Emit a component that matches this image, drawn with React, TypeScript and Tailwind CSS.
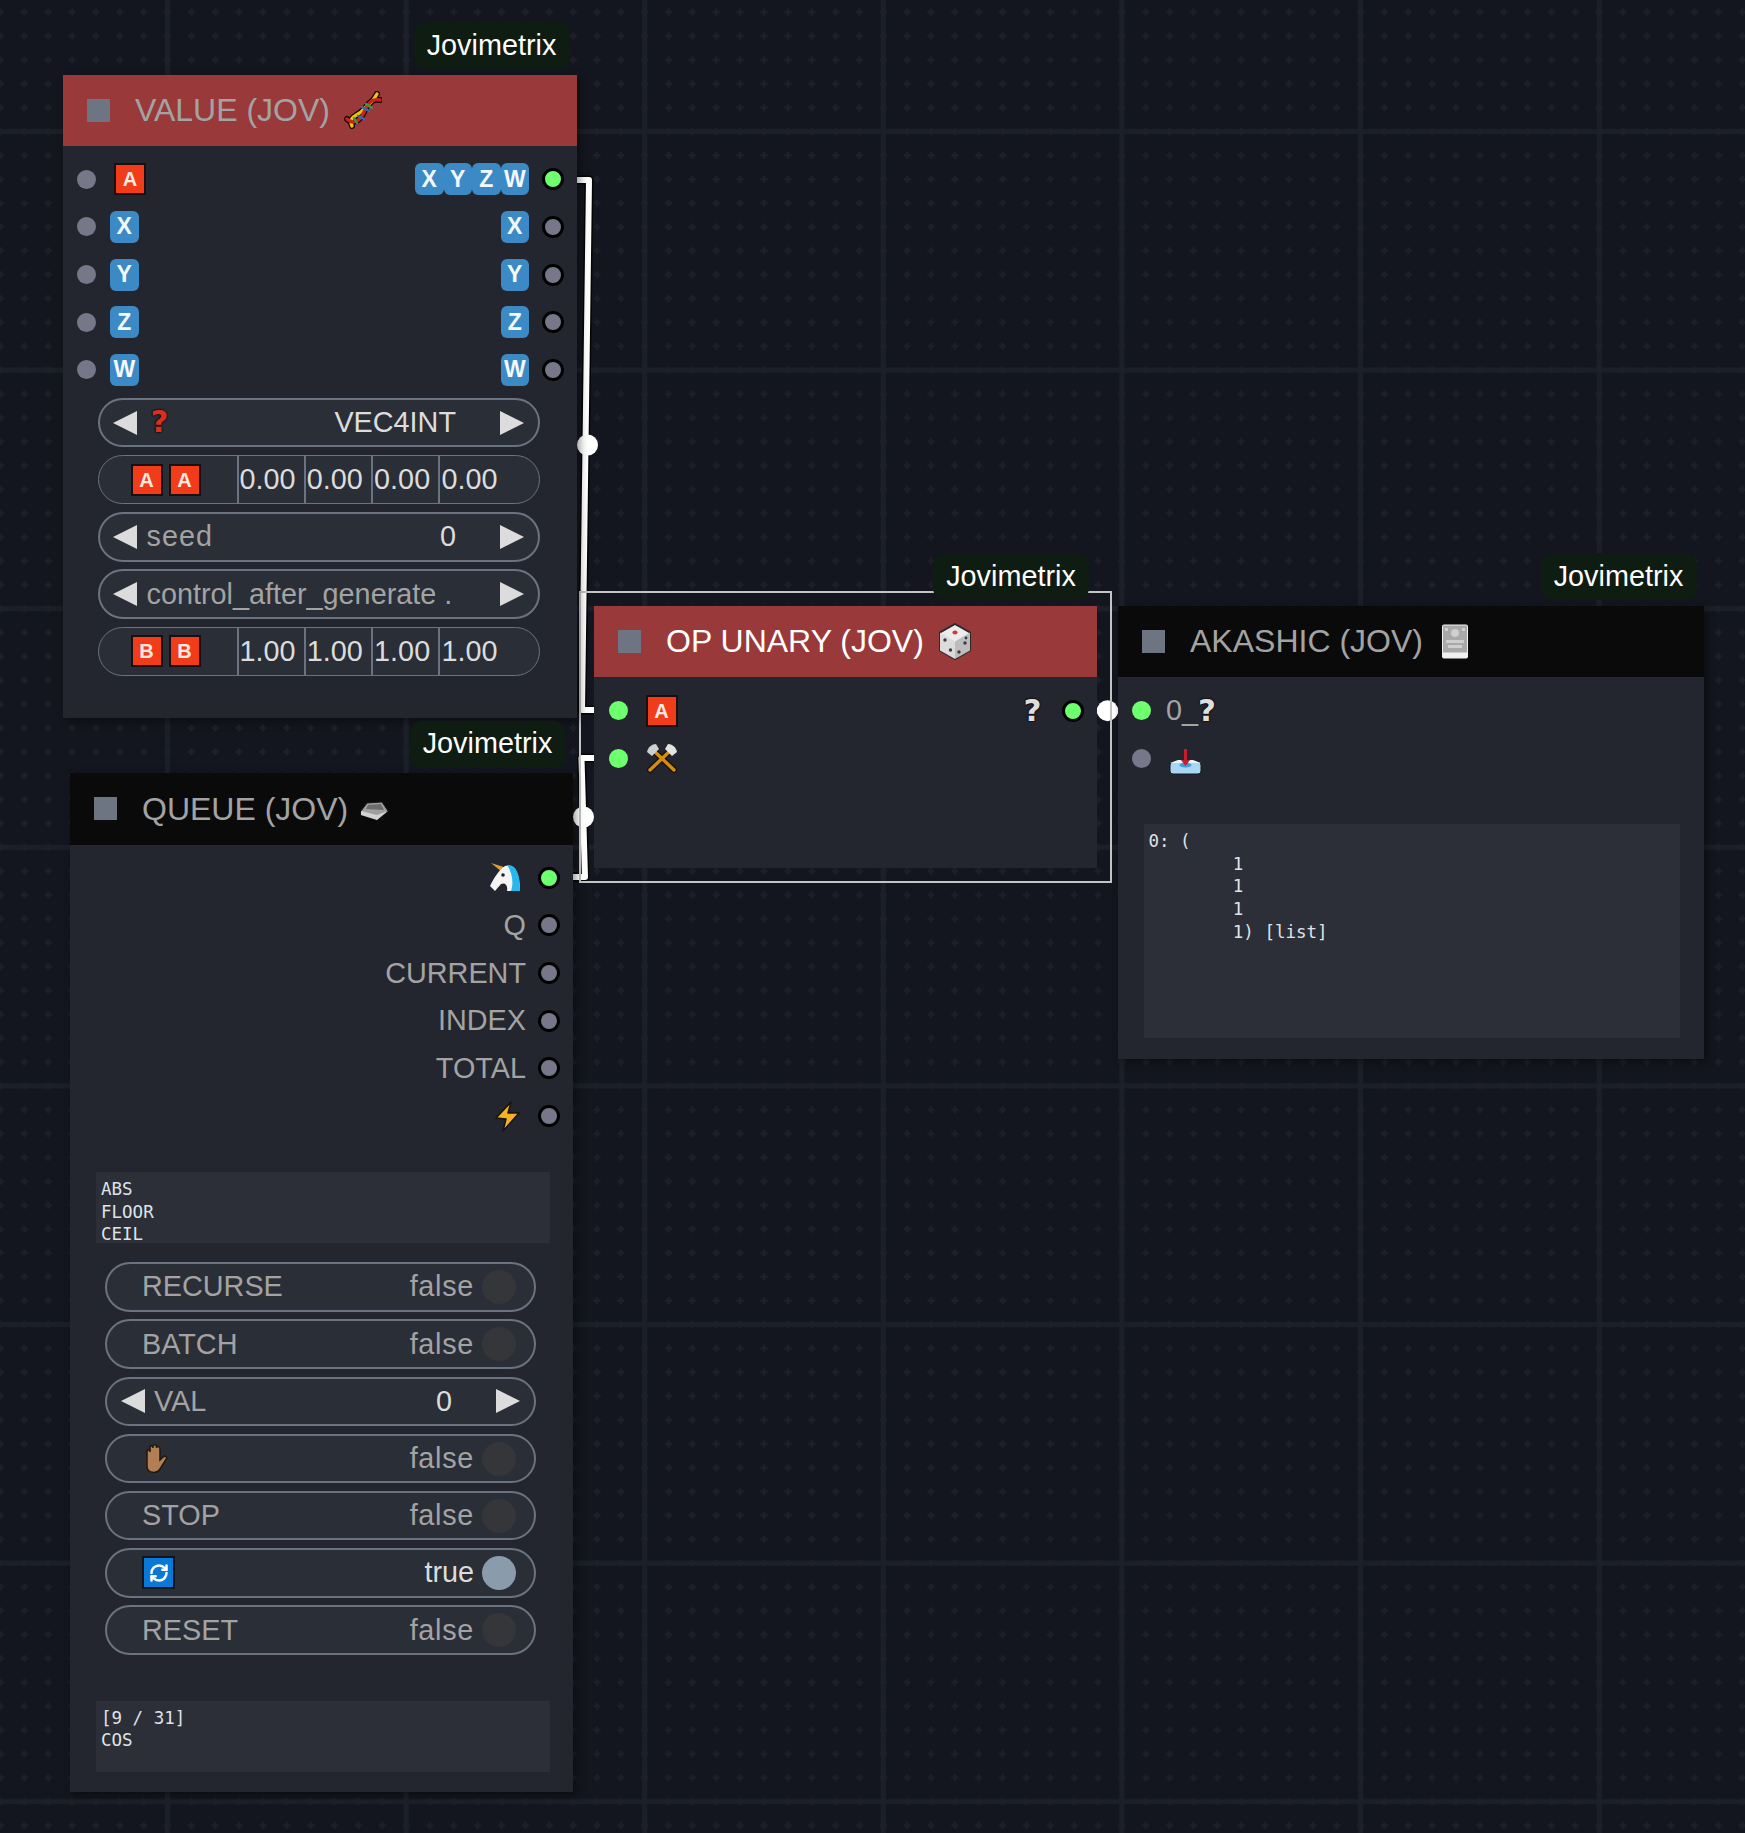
import type { ReactNode } from "react";
import { RefreshCw } from "lucide-react";

const sans = "font-['Liberation_Sans',Arial,sans-serif]";
const mono = "font-['DejaVu_Sans_Mono',monospace]";
const GREEN = "bg-[#6dff6d]";
const GREY = "bg-[#77778a]";

const Grid = () => {
  const steps = [-5, -4, -3, -2, -1, 0, 1, 2, 3, 4, 5];
  const at = (k: number) => 119.3 + k * 23.86;
  return (
    <svg className="absolute inset-0" width="1745" height="1833">
      <defs>
        <pattern id="grid" x="48.2" y="12.2" width="238.6" height="238.6" patternUnits="userSpaceOnUse">
          <rect x="116.8" y="0" width="5" height="238.6" fill="#1b1f27" />
          <rect x="0" y="116.8" width="238.6" height="5" fill="#1b1f27" />
          {steps.map((a) =>
            steps.map((b) => (
              <g key={`${a}-${b}`} fill="#1d2029">
                <rect x={at(a) - 3.5} y={at(b) - 1.2} width="7" height="2.4" />
                <rect x={at(a) - 1.2} y={at(b) - 3.5} width="2.4" height="7" />
              </g>
            ))
          )}
        </pattern>
      </defs>
      <rect width="1745" height="1833" fill="url(#grid)" />
    </svg>
  );
};

const Wires = () => (
  <svg className="absolute inset-0" width="1745" height="1833">
    <g fill="none" strokeLinejoin="round">
      <path d="M577 180 L589 180 L582 710 L594 710" stroke="#050505" strokeWidth="9" />
      <path d="M573 877 L585 877 L581.5 758 L594 758" stroke="#050505" strokeWidth="9" />
      <path d="M577 180 L589 180 L582 710 L594 710" stroke="#fff" strokeWidth="6" />
      <path d="M573 877 L585 877 L581.5 758 L594 758" stroke="#fff" strokeWidth="6" />
      <path d="M1097 710.7 L1118 710.7" stroke="#fff" strokeWidth="6" />
    </g>
    <circle cx="587.5" cy="445" r="10.5" fill="#fff" />
    <circle cx="583.5" cy="817" r="10.5" fill="#fff" />
    <circle cx="1107.5" cy="710.7" r="10.5" fill="#fff" />
  </svg>
);

const Dot = ({ color, out }: { color: string; out?: boolean }) =>
  out ? (
    <div className={`size-[22px] shrink-0 rounded-full border-[3px] border-black ${color}`} />
  ) : (
    <div className={`size-[19px] shrink-0 rounded-full ${color}`} />
  );

const Tile = ({ ch }: { ch: string }) => (
  <div className={`flex size-[32px] shrink-0 items-center justify-center border-2 border-[#1a0f0e] bg-[#f03c18] text-[20px] leading-none font-bold text-[#ffe9e2] ${sans}`}>
    {ch}
  </div>
);

const Key = ({ ch }: { ch: string }) => (
  <div className={`flex h-[32px] w-[28.5px] shrink-0 items-center justify-center rounded-[6px] bg-[#3b8ac6] text-[23px] leading-none font-bold text-[#f4f9fd] ${sans}`}>
    {ch}
  </div>
);

const Ask = ({ red }: { red?: boolean }) => (
  <span
    className={`font-['DejaVu_Sans',sans-serif] text-[31px] leading-none font-bold ${
      red ? "text-[#d8301c] [text-shadow:0_0_2px_#000,0_0_2px_#000]" : "text-[#dedede] [text-shadow:0_0_2px_#000,0_0_2px_#000]"
    }`}
  >
    ?
  </span>
);

const DnaIcon = () => (
  <svg width="38" height="38" viewBox="0 0 38 38" className="ml-[14px]">
    <g fill="none" strokeLinecap="round">
      <path d="M8 35 C4 25 14 25 19 19 S28 13 33 3" stroke="#1a0505" strokeWidth="6" />
      <path d="M3 28 C10 35 17 28 20 21 S27 7 36 9" stroke="#1a0505" strokeWidth="6" />
      <path d="M8 35 C4 25 14 25 19 19 S28 13 33 3" stroke="#e8c414" strokeWidth="3.4" />
      <path d="M3 28 C10 35 17 28 20 21 S27 7 36 9" stroke="#c8231f" strokeWidth="3.4" />
      <path d="M14 25 L20 28 M18 16 L25 20" stroke="#2c6fb5" strokeWidth="2.4" />
      <path d="M10 27 L13 32 M22 13 L28 17" stroke="#3b9a4a" strokeWidth="2.2" />
    </g>
  </svg>
);

const DieIcon = () => (
  <svg width="34" height="37" viewBox="0 0 34 37" className="ml-[14px]">
    <polygon points="17,1 32,9.5 32,27.5 17,36 2,27.5 2,9.5" fill="#ececec" stroke="#2a2a2a" strokeWidth="2" />
    <polygon points="17,18.5 32,9.5 32,27.5 17,36" fill="#bdbdbd" />
    <polygon points="17,18.5 2,9.5 2,27.5 17,36" fill="#dcdcdc" />
    <ellipse cx="17" cy="9.5" rx="2.6" ry="2" fill="#d23a3a" />
    <g fill="#3c3c3c">
      <circle cx="7" cy="17" r="1.7" />
      <circle cx="12.5" cy="27" r="1.7" />
      <circle cx="21" cy="29" r="1.7" />
      <circle cx="27" cy="20" r="1.7" />
      <circle cx="28" cy="15" r="1.4" />
    </g>
  </svg>
);

const BookIcon = () => (
  <svg width="28" height="35" viewBox="0 0 28 35" className="ml-[18px]">
    <rect x="1" y="0.5" width="26" height="34" rx="2" fill="#f0f0f0" />
    <rect x="2" y="1.5" width="24" height="27" fill="#a9a9a9" />
    <g fill="#cfcfcf">
      <circle cx="14" cy="9" r="4" />
      <rect x="5" y="16" width="18" height="3" />
      <rect x="7" y="21" width="14" height="3" />
      <rect x="4" y="4" width="3" height="3" />
      <rect x="21" y="4" width="3" height="3" />
    </g>
  </svg>
);

const TrayIcon = () => (
  <svg width="29" height="20" viewBox="0 0 29 20" className="mt-[4px] ml-[12px]">
    <polygon points="1,10 7,2 22,1 28,10 17,19 1,14" fill="#9f9f9f" stroke="#1a1a1a" strokeWidth="1" />
    <polygon points="6,8 8,4 21,3 24,9" fill="#6d6d6d" />
    <polygon points="1,10 17,14 28,10 17,19 1,14" fill="#d2d2d2" />
  </svg>
);

const UnicornIcon = () => (
  <svg width="31" height="30" viewBox="0 0 31 30">
    <path d="M17 5 L1 0 L12 9 Z" fill="#d7a13a" />
    <path d="M15 3 C24 1 30 9 30 28 L17 28 C18 22 15 19 11 21 L5 28 L0 23 C4 15 8 8 15 3 Z" fill="#f4f4f4" />
    <path d="M17 2 C26 1 30 10 30 28 L21 28 C24 20 22 9 17 2 Z" fill="#27b7ec" />
    <circle cx="13" cy="12" r="1.8" fill="#222" />
  </svg>
);

const BoltIcon = () => (
  <svg width="27" height="31" viewBox="0 0 27 31">
    <polygon points="17,1 2,17 12,18 9,30 25,12 14,12" fill="#f4b324" stroke="#161310" strokeWidth="1.5" strokeLinejoin="round" />
  </svg>
);

const AxesIcon = () => (
  <svg width="32" height="30" viewBox="0 0 32 30">
    <g strokeLinecap="round">
      <path d="M7 7 L28 27" stroke="#1b1206" strokeWidth="6" />
      <path d="M25 7 L4 27" stroke="#1b1206" strokeWidth="6" />
      <path d="M7 7 L28 27" stroke="#d48d12" strokeWidth="3.4" />
      <path d="M25 7 L4 27" stroke="#d48d12" strokeWidth="3.4" />
    </g>
    <path d="M1 9 C2 4 6 1 10 1 L13 6 L6 13 Z" fill="#cfcfcf" />
    <path d="M31 9 C30 4 26 1 22 1 L19 6 L26 13 Z" fill="#e3e3e3" />
  </svg>
);

const InboxIcon = () => (
  <svg width="33" height="26" viewBox="0 0 33 26">
    <rect x="1" y="13" width="31" height="12" rx="3" fill="#a9d6f2" stroke="#141a22" />
    <path d="M1 14 L9 11 L24 11 L32 14 L22 14 L19 18 L14 18 L11 14 Z" fill="#e6f4fc" />
    <ellipse cx="16.5" cy="16" rx="6" ry="2.6" fill="#3f9be0" />
    <path d="M15 0 H18 V11 H21 L16.5 17 L12 11 H15 Z" fill="#c91d2c" />
  </svg>
);

const HandIcon = () => (
  <svg width="26" height="31" viewBox="0 0 26 31">
    <path
      d="M5 9 C5 6 8 6 8 9 V5 C8 2 11 2 11 5 V3.5 C11 1 14.5 1 14.5 3.5 V5 C14.5 3 18 3 18 6 V17 L21 14 C23.5 12 25.5 14 24 16.5 L18 26 C15 31 6 30.5 5 24 Z"
      fill="#b27f54"
      stroke="#1f1710"
      strokeWidth="1.5"
    />
  </svg>
);

const Title = ({ text, color, light, icon }: { text: string; color: string; light?: boolean; icon: ReactNode }) => (
  <div className={`flex h-[71.5px] shrink-0 items-center pl-[24px] ${color}`}>
    <div className="mr-[25px] size-[23px] shrink-0 bg-[#6e7582]" />
    <span className={`text-[32px] leading-none whitespace-nowrap ${light ? "text-white" : "text-[#a3a3a3]"}`}>{text}</span>
    {icon}
  </div>
);

const Badge = () => (
  <div className={`absolute right-[7.5px] bottom-full z-10 mb-[5.5px] flex h-[47px] w-[156px] items-center justify-center rounded-[12px] bg-[#0f1c12] text-[28.8px] text-white ${sans}`}>
    Jovimetrix
  </div>
);

const Row = ({ left, right }: { left?: ReactNode; right?: ReactNode }) => (
  <div className="flex h-[47.67px] items-center justify-between">
    <div className="flex items-center">{left}</div>
    <div className="flex items-center">{right}</div>
  </div>
);

const Arrow = ({ flip }: { flip?: boolean }) => (
  <svg width="24" height="24" viewBox="0 0 24 24" className="shrink-0">
    <polygon points={flip ? "0,0 24,12 0,24" : "24,0 0,12 24,24"} fill="#dcdcdc" />
  </svg>
);

const Stepper = ({ label, value, tall }: { label: ReactNode; value: string; tall?: boolean }) => (
  <div className={`flex h-[49.5px] items-center rounded-full border-2 border-[#6b7280] bg-[#2a2e37] pr-[14px] pl-[13.5px] text-[28.8px] ${tall ? "mt-0" : ""}`}>
    <Arrow />
    <div className="ml-[9.5px] flex min-w-0 flex-1 items-center text-[#a3a3a3]">{label}</div>
    <span className="mr-[44px] text-[#dcdcdc]">{value}</span>
    <Arrow flip />
  </div>
);

const Multi = ({ ch, value }: { ch: string; value: string }) => (
  <div className="flex h-[49.5px] items-stretch rounded-full border border-[#6b7280] bg-[#2a2e37] text-[28.8px] text-[#dcdcdc]">
    <div className="flex w-[138px] items-center gap-[6px] pl-[32px]">
      <Tile ch={ch} />
      <Tile ch={ch} />
    </div>
    {[0, 1, 2, 3].map((i) => (
      <div key={i} className="flex w-[67.3px] items-center border-l-2 border-[#6b7280] pl-[1px]">
        {value}
      </div>
    ))}
  </div>
);

const Toggle = ({ label, on }: { label: ReactNode; on?: boolean }) => (
  <div className="flex h-[49.5px] items-center rounded-full border-2 border-[#6b7280] bg-[#2a2e37] pr-[18px] pl-[35px] text-[28.8px] text-[#a3a3a3]">
    <div className="flex flex-1 items-center">{label}</div>
    <span className={`mr-[8px] ${on ? "text-[#dcdcdc]" : "tracking-[0.7px]"}`}>{on ? "true" : "false"}</span>
    <div className={`size-[34px] rounded-full ${on ? "bg-[#8a9cac]" : "bg-[#35363a]"}`} />
  </div>
);

const TextArea = ({ className, lines }: { className: string; lines: string }) => (
  <pre className={`overflow-hidden bg-[#2c2f38] pt-[6px] pl-[5px] text-[17.5px] leading-[22.6px] text-[#dfe3e8] ${mono} ${className}`}>{lines}</pre>
);

const ValueNode = () => (
  <div className={`absolute top-[74.5px] left-[63px] flex h-[643px] w-[514px] flex-col bg-[#23262e] shadow-[3px_3px_8px_rgba(0,0,0,0.4)] ${sans}`}>
    <Badge />
    <Title text="VALUE (JOV)" color="bg-[#993939]" icon={<DnaIcon />} />
    <div className="pt-[9.5px] pr-[13px] pl-[14px]">
      <Row
        left={
          <>
            <Dot color={GREY} />
            <div className="ml-[18px]">
              <Tile ch="A" />
            </div>
          </>
        }
        right={
          <>
            <Key ch="X" />
            <Key ch="Y" />
            <Key ch="Z" />
            <Key ch="W" />
            <div className="ml-[13px]">
              <Dot color={GREEN} out />
            </div>
          </>
        }
      />
      {["X", "Y", "Z", "W"].map((ch) => (
        <Row
          key={ch}
          left={
            <>
              <Dot color={GREY} />
              <div className="ml-[14px]">
                <Key ch={ch} />
              </div>
            </>
          }
          right={
            <>
              <Key ch={ch} />
              <div className="ml-[13px]">
                <Dot color={GREY} out />
              </div>
            </>
          }
        />
      ))}
    </div>
    <div className="mt-[4px] mr-[37px] ml-[34.5px] flex flex-col gap-[7.7px]">
      <Stepper
        label={
          <span className="ml-[4px]">
            <Ask red />
          </span>
        }
        value="VEC4INT"
      />
      <Multi ch="A" value="0.00" />
      <Stepper label={<span className="tracking-[1px]">seed</span>} value="0" />
      <Stepper label="control_after_generate ." value="" />
      <Multi ch="B" value="1.00" />
    </div>
  </div>
);

const OpNode = () => (
  <div className={`absolute top-[605.7px] left-[594px] flex h-[262px] w-[502.5px] flex-col bg-[#23262e] ${sans}`}>
    <div className="absolute top-[-15px] right-[-15.5px] bottom-[-15px] left-[-15px] border-2 border-[#c4c4c4]" />
    <Badge />
    <div className="relative flex h-full flex-col bg-[#23262e]">
      <Title text="OP UNARY (JOV)" color="bg-[#993939]" light icon={<DieIcon />} />
      <div className="pt-[9.5px] pr-[13px] pl-[14.5px]">
        <Row
          left={
            <>
              <Dot color={GREEN} />
              <div className="ml-[18px]">
                <Tile ch="A" />
              </div>
            </>
          }
          right={
            <>
              <Ask />
              <div className="ml-[20px]">
                <Dot color={GREEN} out />
              </div>
            </>
          }
        />
        <Row
          left={
            <>
              <Dot color={GREEN} />
              <div className="ml-[18px]">
                <AxesIcon />
              </div>
            </>
          }
        />
      </div>
    </div>
  </div>
);

const AkashicNode = () => (
  <div className={`absolute top-[605.7px] left-[1118px] flex h-[453px] w-[586px] flex-col bg-[#23262e] shadow-[3px_3px_8px_rgba(0,0,0,0.4)] ${sans}`}>
    <Badge />
    <Title text="AKASHIC (JOV)" color="bg-[#0a0a0a]" icon={<BookIcon />} />
    <div className="pt-[9.5px] pl-[14px]">
      <Row
        left={
          <>
            <Dot color={GREEN} />
            <span className="ml-[15px] text-[28.8px] leading-none text-[#a3a3a3]">0_</span>
            <Ask />
          </>
        }
      />
      <Row
        left={
          <>
            <Dot color={GREY} />
            <div className="mt-[8px] ml-[18px]">
              <InboxIcon />
            </div>
          </>
        }
      />
    </div>
    <TextArea
      className="mt-[42.3px] ml-[25.5px] h-[213.5px] w-[536.5px]"
      lines={"0: (\n        1\n        1\n        1\n        1) [list]"}
    />
  </div>
);

const QueueNode = () => (
  <div className={`absolute top-[773px] left-[70px] flex h-[1018.5px] w-[503px] flex-col bg-[#23262e] shadow-[3px_3px_8px_rgba(0,0,0,0.4)] ${sans}`}>
    <Badge />
    <Title text="QUEUE (JOV)" color="bg-[#0a0a0a]" icon={<TrayIcon />} />
    <div className="pt-[9.5px] pr-[13px] text-[28.8px] leading-none text-[#a3a3a3]">
      {[
        <UnicornIcon key="a" />,
        "Q",
        "CURRENT",
        "INDEX",
        "TOTAL",
        <BoltIcon key="b" />,
      ].map((label, i) => (
        <Row
          key={i}
          right={
            <>
              {label}
              <div className={i === 0 || i === 5 ? "ml-[17px]" : "ml-[12px]"}>
                <Dot color={i === 0 ? GREEN : GREY} out />
              </div>
            </>
          }
        />
      ))}
    </div>
    <TextArea className="mt-[32px] ml-[26px] h-[71px] w-[454px]" lines={"ABS\nFLOOR\nCEIL"} />
    <div className="mt-[19.3px] mr-[37px] ml-[35px] flex flex-col gap-[7.7px]">
      <Toggle label="RECURSE" />
      <Toggle label="BATCH" />
      <Stepper label="VAL" value="0" />
      <Toggle label={<HandIcon />} />
      <Toggle label="STOP" />
      <Toggle
        label={
          <div className="flex size-[33px] items-center justify-center border-2 border-[#10151c] bg-[#0a78d6]">
            <RefreshCw size={20} strokeWidth={3} color="#fff" />
          </div>
        }
        on
      />
      <Toggle label="RESET" />
    </div>
    <TextArea className="mt-[46px] ml-[26px] h-[71.5px] w-[454px]" lines={"[9 / 31]\nCOS"} />
  </div>
);

export default function App() {
  return (
    <div className="relative h-[1833px] w-[1745px] overflow-hidden bg-[#13161e]">
      <Grid />
      <Wires />
      <OpNode />
      <ValueNode />
      <QueueNode />
      <AkashicNode />
    </div>
  );
}
